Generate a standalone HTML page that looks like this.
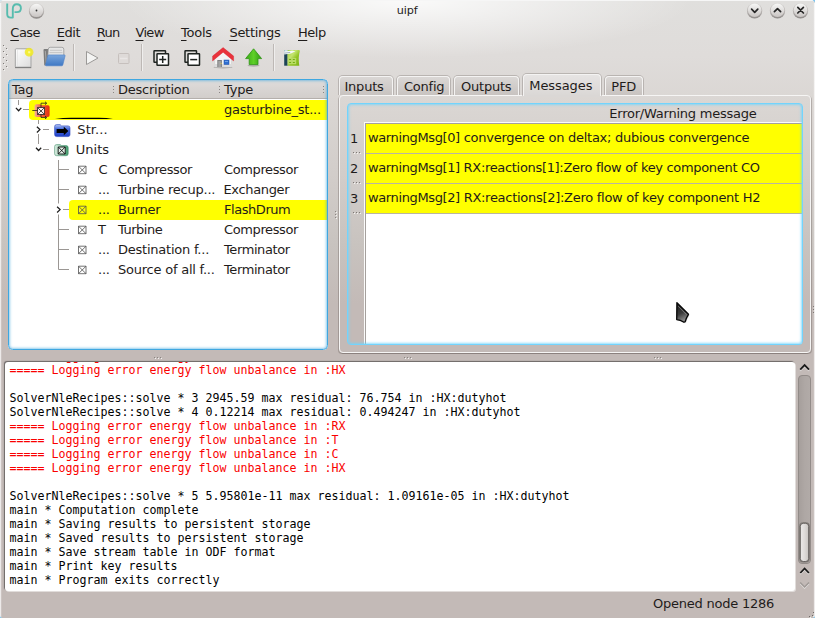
<!DOCTYPE html>
<html><head><meta charset="utf-8"><title>uipf</title>
<style>
html,body{margin:0;padding:0;}
body{width:815px;height:618px;overflow:hidden;position:relative;font-family:"DejaVu Sans","Liberation Sans",sans-serif;font-size:13px;letter-spacing:-0.23px;color:#1f1c1b;
background:radial-gradient(ellipse 285px 58px at 407px 0px,rgba(255,255,255,0.85),rgba(255,255,255,0) 100%),linear-gradient(to bottom,#e0dfdd 0px,#dfdcda 56px,#dad6d3 104px,#d2cdca 174px,#c8c3bf 244px,#c3bab7 304px,#c3bab7 618px);}
.abs{position:absolute;}
u{text-decoration-thickness:1px;text-underline-offset:2.500px;}
.t{position:absolute;white-space:pre;line-height:16px;}
svg{position:absolute;overflow:visible;}
#log{position:absolute;left:5px;top:362px;width:790px;height:229px;background:#fff;border-radius:3px;overflow:hidden;box-shadow:-1px -1px 1px rgba(0,0,0,0.45),1px 1px 0 rgba(255,255,255,0.5);}
#log pre{margin:0;position:absolute;left:4.500px;top:-13px;font-family:"DejaVu Sans Mono","Liberation Mono",monospace;font-size:11.63px;letter-spacing:0;line-height:14px;color:#000;}
#log .r{color:#fa0000;}
.yrow{position:absolute;background:#ffff00;}
.hdr{position:absolute;background:linear-gradient(to bottom,#dfdcdb,#d2cecb);}
.tab{position:absolute;top:76px;height:19px;border:1px solid #f4f3f2;border-bottom:none;border-radius:4px 4px 0 0;box-sizing:border-box;background:linear-gradient(to bottom,#dad7d5,#c8c3c0);box-shadow:0 0 0 1px rgba(60,50,45,0.22);clip-path:inset(-2px -2px 0 -2px);}
</style></head><body>
<!-- window frame edges -->
<div class="abs" style="left:0;top:0;width:815px;height:1px;background:#f6f6f6"></div>
<div class="abs" style="left:813px;top:3px;width:2px;height:615px;background:linear-gradient(to right,rgba(255,255,255,0.1),rgba(255,255,255,0.1) 50%,rgba(255,255,255,0.7) 50%)"></div><div class="abs" style="left:812px;top:0;width:3px;height:3px;background:radial-gradient(circle at 0 100%,rgba(0,0,0,0) 2.500px,#7ec4ee 3px)"></div><div class="abs" style="left:0;top:0;width:3px;height:3px;background:radial-gradient(circle at 100% 100%,rgba(0,0,0,0) 2.500px,#d8e6ee 3px)"></div>
<div class="abs" style="left:0;top:3px;width:2px;height:615px;background:linear-gradient(to right,rgba(255,255,255,0.7) 50%,rgba(255,255,255,0.15) 50%)"></div>
<!-- title -->
<div class="t" style="left:396.700px;top:3px;font-size:11.200px;letter-spacing:-0.100px">uipf</div>
<!-- menu -->
<div class="t" style="left:10.300px;top:25px;letter-spacing:-0.500px"><u>C</u>ase</div>
<div class="t" style="left:56.800px;top:25px;letter-spacing:-0.500px"><u>E</u>dit</div>
<div class="t" style="left:96.800px;top:25px;letter-spacing:-0.800px"><u>R</u>un</div>
<div class="t" style="left:135.500px;top:25px;letter-spacing:-0.700px"><u>V</u>iew</div>
<div class="t" style="left:181px;top:25px;"><u>T</u>ools</div>
<div class="t" style="left:229.400px;top:25px;letter-spacing:-0.280px"><u>S</u>ettings</div>
<div class="t" style="left:298px;top:25px;letter-spacing:-0.500px"><u>H</u>elp</div>

<!-- TOOLBAR -->
<svg id="tb" style="left:0;top:0" width="815" height="76">
 <defs>
  <radialGradient id="btn" cx="0.5" cy="0.3" r="0.7"><stop offset="0" stop-color="#fbfbfb"/><stop offset="0.6" stop-color="#e4e2e1"/><stop offset="1" stop-color="#b9b5b3"/></radialGradient>
  <linearGradient id="btn2" x1="0" y1="0" x2="0" y2="1"><stop offset="0" stop-color="#f7f7f6"/><stop offset="1" stop-color="#c9c5c3"/></linearGradient>
  <radialGradient id="glow" cx="0.5" cy="0.5" r="0.5"><stop offset="0" stop-color="#ffffc0"/><stop offset="0.35" stop-color="#f4ee30"/><stop offset="0.8" stop-color="#f0e820" stop-opacity="0.8"/><stop offset="1" stop-color="#f0e820" stop-opacity="0"/></radialGradient>
  <linearGradient id="page" x1="0" y1="0" x2="1" y2="1"><stop offset="0" stop-color="#ffffff"/><stop offset="1" stop-color="#dcdcdc"/></linearGradient>
  <linearGradient id="fold" x1="0" y1="0" x2="0" y2="1"><stop offset="0" stop-color="#7aa6dc"/><stop offset="1" stop-color="#3f78c4"/></linearGradient>
  <linearGradient id="grn" x1="0" y1="0" x2="1" y2="0"><stop offset="0" stop-color="#3aa818"/><stop offset="0.5" stop-color="#5fd028"/><stop offset="1" stop-color="#2f9a12"/></linearGradient>
  <linearGradient id="calc" x1="0" y1="0" x2="0" y2="1"><stop offset="0" stop-color="#b4dc3c"/><stop offset="1" stop-color="#7fae1c"/></linearGradient>
 </defs>
 <!-- logo -->
 <g fill="none" stroke="#57bcae" stroke-width="1.900" stroke-linecap="butt" stroke-linejoin="round">
  <path d="M7.200 3.400v10.600q0 3.600 3.600 3.600h2v-8.600q0-4.700 4-4.700q4.100 0 4.100 3.900q0 3.900-4.100 3.900h-2.300"/>
 </g>
 <!-- window buttons -->
 <defs><linearGradient id="btnsh" x1="0" y1="0" x2="0" y2="1"><stop offset="0" stop-color="#d9d7d5"/><stop offset="0.5" stop-color="#bdb9b7"/><stop offset="1" stop-color="#8d8987"/></linearGradient></defs>
 <circle cx="36.5" cy="11.0" r="7.700" fill="url(#btnsh)"/><circle cx="36.5" cy="10.4" r="6.700" fill="url(#btn2)"/><circle cx="754.6" cy="10.8" r="7.700" fill="url(#btnsh)"/><circle cx="754.6" cy="10.2" r="6.700" fill="url(#btn2)"/><circle cx="777.5" cy="10.8" r="7.700" fill="url(#btnsh)"/><circle cx="777.5" cy="10.2" r="6.700" fill="url(#btn2)"/><circle cx="800.5" cy="10.8" r="7.700" fill="url(#btnsh)"/><circle cx="800.5" cy="10.2" r="6.700" fill="url(#btn2)"/>
 <circle cx="36.500" cy="10.500" r="0.900" fill="#333"/>
 <g fill="none" stroke="#262626" stroke-width="1.700" stroke-linecap="round" stroke-linejoin="round">
  <path d="M751.600 9.200l3.100 3.100l3.100-3.100"/>
  <path d="M774.400 11.700l3.100-3.100l3.100 3.100"/>
  <path d="M797.800 7.400l5.600 5.600M803.400 7.400l-5.600 5.600"/>
 </g>
 <!-- handle dots -->
 <g fill="#7d7976"><rect x="3" y="45" width="1" height="1"/><rect x="3" y="51" width="1" height="1"/><rect x="3" y="57" width="1" height="1"/><rect x="3" y="63" width="1" height="1"/><rect x="3" y="69" width="1" height="1"/><rect x="6" y="48" width="1" height="1"/><rect x="6" y="54" width="1" height="1"/><rect x="6" y="60" width="1" height="1"/><rect x="6" y="66" width="1" height="1"/></g>
 <g fill="#f4f3f2"><rect x="4" y="46" width="1" height="1"/><rect x="4" y="52" width="1" height="1"/><rect x="4" y="58" width="1" height="1"/><rect x="4" y="64" width="1" height="1"/><rect x="4" y="70" width="1" height="1"/><rect x="7" y="49" width="1" height="1"/><rect x="7" y="55" width="1" height="1"/><rect x="7" y="61" width="1" height="1"/><rect x="7" y="67" width="1" height="1"/></g>
 <!-- separators -->
 <g>
  <rect x="73" y="44" width="1" height="27" fill="#bdb8b5"/><rect x="74" y="44" width="1" height="27" fill="#efeeed"/>
  <rect x="141" y="44" width="1" height="27" fill="#bdb8b5"/><rect x="142" y="44" width="1" height="27" fill="#efeeed"/>
  <rect x="273" y="44" width="1" height="27" fill="#bdb8b5"/><rect x="274" y="44" width="1" height="27" fill="#efeeed"/>
 </g>
 <!-- new doc -->
 <rect x="15.300" y="48.800" width="15.700" height="18.400" rx="0.800" fill="url(#page)" stroke="#a3a3a3" stroke-width="1"/>
 <path d="M15 67.600h16.300" stroke="#7e7e7e" stroke-width="1.100"/>
 <path d="M17.500 50v16" stroke="#e2e2e2" stroke-width="0.700"/>
 <circle cx="29.100" cy="52.200" r="4.900" fill="url(#glow)"/>
 <!-- open folder -->
 <path d="M43.500 50q0-1 1-1h4v6l-3 10.500h-0.800q-0.500 0-0.500-0.800z" fill="#7c7c7c"/>
 <path d="M45.300 51l1 12" stroke="#b5b5b5" stroke-width="0.800"/>
 <path d="M48.300 49q0.200-1.700 2-1.700h11.500q2 0 2 2v6.500h-16z" fill="#e6e6e6" stroke="#8f8f8f" stroke-width="0.700"/>
 <path d="M50 50.300h12M49.500 52.600h13" stroke="#bcbcbc" stroke-width="0.800"/>
 <path d="M48.800 54.900h15.600q0.900 0 0.700 0.900l-2.300 9.200q-0.200 0.800-1.100 0.800h-15.500q-0.900 0-0.700-0.800l2.300-9.400q0.200-0.700 1-0.700z" fill="url(#fold)" stroke="#4b7fc6" stroke-width="0.600"/>
 <!-- play -->
 <path d="M86.500 51.500l11.500 6.500l-11.500 6.500z" fill="#f4f4f3" stroke="#9b9997" stroke-width="1" stroke-linejoin="round"/>
 <!-- stop -->
 <rect x="118.500" y="53.500" width="10.500" height="10" rx="1" fill="#dedad8" stroke="#c6c0bd" stroke-width="1"/><path d="M120 58.500h7.500" stroke="#e9e6e5" stroke-width="1.500"/>
 <!-- expand -->
 <g stroke="#1f2421" stroke-width="1.500">
  <rect x="154" y="50.800" width="11.500" height="11.500" rx="0.500" fill="none"/>
  <rect x="157" y="53.800" width="11.500" height="11.500" rx="0.500" fill="#fff"/>
  <path d="M159.200 59.600h7M162.700 56.100v7" fill="none"/>
  <rect x="185" y="50.800" width="11.500" height="11.500" rx="0.500" fill="none"/>
  <rect x="188" y="53.800" width="11.500" height="11.500" rx="0.500" fill="#fff"/>
  <path d="M190.200 59.600h7" fill="none"/>
 </g>
 <!-- home -->
 <ellipse cx="223" cy="67.200" rx="9.500" ry="1.300" fill="#000" opacity="0.22"/>
 <path d="M214.700 57l8.400-7l8.400 7v10h-16.800z" fill="#f4f4f4" stroke="#cfcfcf" stroke-width="0.600"/>
 <path d="M214.700 64h16.800v3h-16.800z" fill="#dcdcdc"/>
 <rect x="217.300" y="60" width="4.600" height="7" fill="#7f7f7f"/>
 <rect x="218.300" y="61" width="2.600" height="6" fill="#a4a4a4"/>
 <rect x="220.600" y="62.800" width="0.900" height="1.200" fill="#e8d44a"/>
 <rect x="224" y="60" width="5" height="4.500" fill="#2f6fd0" stroke="#1c4fa8" stroke-width="0.500"/>
 <path d="M225 61.500h3" stroke="#7fb0f0" stroke-width="0.800"/>
 <path d="M223.100 47.600l10.500 8.500v4.800l-10.500-8.700l-10.500 8.700v-4.800z" fill="#e9333c" stroke="#d4202a" stroke-width="0.400" stroke-linejoin="round"/>
 <!-- up arrow -->
 <ellipse cx="253.500" cy="65.500" rx="6" ry="1.200" fill="#000" opacity="0.2"/>
 <path d="M253.600 48.800l8 9.800h-3.600v6h-8.800v-6h-3.600z" fill="url(#grn)" stroke="#2f9414" stroke-width="0.8" stroke-linejoin="round"/>
 <!-- calc -->
 <defs><linearGradient id="calc2" x1="0" y1="0" x2="1" y2="1"><stop offset="0" stop-color="#a6d23a"/><stop offset="0.35" stop-color="#c4e470"/><stop offset="0.6" stop-color="#92c424"/><stop offset="1" stop-color="#7eb218"/></linearGradient></defs>
 <path d="M284.200 50h3.500v15.700h-3.500z" fill="#1d4458"/>
 <path d="M287.500 50h11.300q1 0 1 1q-1.800 6.500-0.500 14.700h-11.800z" fill="url(#calc2)"/>
 <path d="M284.200 50h3.500v4h-3.500z" fill="#c9dde4"/>
 <path d="M284.200 51.600l8-1.200l3.200 0.800l-4.400 2.300l-6.800 1z" fill="#f4f9fa"/>
 <path d="M284.200 53.200l6-0.800" stroke="#6d8894" stroke-width="0.600" fill="none"/>
 <rect x="288" y="58" width="8.200" height="6.200" fill="#b9dc66"/>
 <g fill="#74ac10"><rect x="288.900" y="59.100" width="2.300" height="0.900" rx="0.400"/><rect x="292.700" y="59.100" width="2.300" height="0.900" rx="0.400"/><rect x="288.900" y="62" width="2.300" height="0.900" rx="0.400"/><rect x="292.700" y="62" width="2.300" height="0.900" rx="0.400"/></g>
</svg>

<!-- tree panel -->
<div class="abs" id="tree" style="left:8px;top:79px;width:320px;height:271px;box-sizing:border-box;border-radius:4.500px;background:#fff;"></div>

<!-- tree content (page coords) -->
<div class="hdr" style="left:9px;top:80px;width:318px;height:18px;border-radius:3.500px 3.500px 0 0;border-bottom:1px solid #b4afac;"></div>
<div class="t" style="left:12px;top:82px;">Tag</div>
<div class="t" style="left:118px;top:82px;">Description</div>
<div class="t" style="left:224px;top:82px;">Type</div>
<svg style="left:0;top:0" width="340" height="360">
 <g fill="#8a8683"><rect x="113" y="86" width="1" height="1"/><rect x="113" y="89" width="1" height="1"/><rect x="113" y="92" width="1" height="1"/>
 <rect x="219" y="86" width="1" height="1"/><rect x="219" y="89" width="1" height="1"/><rect x="219" y="92" width="1" height="1"/>
 <rect x="323" y="86" width="1" height="1"/><rect x="323" y="89" width="1" height="1"/><rect x="323" y="92" width="1" height="1"/></g>
</svg>
<div class="yrow" style="left:29px;top:100px;width:298px;height:20px;border-radius:4px 0 0 4px"></div>
<div class="yrow" style="left:69px;top:200px;width:258px;height:20px;border-radius:4px 0 0 4px"></div>
<svg style="left:0;top:0" width="340" height="130"><path d="M55 119q8-1.300 16-1.300h28q8 0 14 1.300z" fill="#000"/></svg>
<svg style="left:0;top:0" width="340" height="360" fill="none">
 <g stroke="#9b9794" stroke-width="1">
  <path d="M18.5 100v5M23 109.5h6"/>
  <path d="M38.5 120v4M38.5 134v10M43 129.5h6M43 149.5h6"/>
  <path d="M58.500 160v43.500M58.500 214.500v55M58.500 169.500h10.500M58.500 189.500h10.500M63 209.500h6M58.500 229.500h10.500M58.500 249.500h10.500M58.500 269.500h10.500"/>
 </g>
 <g stroke="#1c1c1c" stroke-width="1.250">
  <path d="M15.900 107.900l2.700 2.900l2.700-2.900"/>
  <path d="M36 147.700l2.600 2.800l2.600-2.800"/>
  <path d="M36.900 126.700l3 2.900l-3 2.900"/>
  <path d="M57.100 206.700l3 2.900l-3 2.900"/>
 </g>
 <!-- small xbox icons -->
 <g stroke="#4f4f4f" stroke-width="0.800" id="xb">
  <path d="M78.500 166.2h7.500v7.500h-7.500zM78.500 166.2l7.500 7.500M86 166.2l-7.500 7.500"/>
  <path d="M78.500 186.2h7.500v7.500h-7.500zM78.500 186.2l7.500 7.500M86 186.2l-7.500 7.500"/>
  <path d="M78.500 206.2h7.500v7.500h-7.500zM78.500 206.2l7.500 7.500M86 206.2l-7.500 7.500"/>
  <path d="M78.500 226.2h7.500v7.500h-7.500zM78.500 226.2l7.500 7.500M86 226.2l-7.500 7.500"/>
  <path d="M78.500 246.2h7.500v7.500h-7.500zM78.500 246.2l7.500 7.500M86 246.2l-7.500 7.500"/>
  <path d="M78.500 266.2h7.500v7.500h-7.500zM78.500 266.2l7.500 7.500M86 266.2l-7.500 7.500"/>
 </g>
 <!-- root icon -->
 <defs>
  <linearGradient id="gr" x1="0" y1="0" x2="1" y2="0"><stop offset="0" stop-color="#f6ae98"/><stop offset="0.4" stop-color="#f0623e"/><stop offset="1" stop-color="#e42e0c"/></linearGradient>
  <linearGradient id="gb" x1="0" y1="0" x2="0" y2="1"><stop offset="0" stop-color="#b8c8f4"/><stop offset="0.35" stop-color="#4a6fe0"/><stop offset="1" stop-color="#1f3fc8"/></linearGradient>
  <linearGradient id="gg" x1="0" y1="0" x2="1" y2="0"><stop offset="0" stop-color="#dff0e6"/><stop offset="1" stop-color="#3f9a6a"/></linearGradient>
 </defs>
 <path d="M34.600 106q0-1.800 1.800-1.800h3.500l1 1h7q1.700 0 1.700 1.700v8.300q0 1.800-1.800 1.800h-11.400q-1.800 0-1.800-1.800z" fill="url(#gr)" stroke="none"/>
 <rect x="37.500" y="107.500" width="7" height="7" fill="#fbeee8" stroke="none"/>
 <g stroke="#1a1a1a" stroke-width="0.750" fill="none"><path d="M37.500 107.500h7v7h-7zM37.500 107.500l7 7M44.500 107.500l-7 7M32.300 110.500h5.200M41 107.500v-4.300h5M41 114.500v3h5"/><path d="M45 101.800l1.800 1.400l-1.800 1.400M45 116.100l1.800 1.400l-1.800 1.400" stroke-width="0.800"/></g>
 <!-- streams folder -->
 <path d="M54.600 126.600q0-2 2-2h3.500l1.500 1.300h6.400q2 0 2 2v6.700q0 2-2 2h-11.400q-2 0-2-2z" fill="url(#gb)" stroke="#2c44b8" stroke-width="0.600"/>
 <path d="M56.600 129h7.200v-2.200l4.600 4.200l-4.600 4.200v-2.200h-7.200z" fill="#000" stroke="none"/>
 <!-- units folder -->
 <path d="M54.600 146.600q0-2 2-2h3.500l1.500 1h4.600q2 0 2 2v6.100q0 2-2 2h-9.600q-2 0-2-2z" fill="url(#gg)" stroke="#4a9270" stroke-width="0.600"/>
 <rect x="58.200" y="147" width="7" height="7" fill="#e6f2ea" stroke="none"/>
 <g stroke="#111" stroke-width="0.900" fill="none"><path d="M58.200 147h7v7h-7zM58.200 147l7 7M65.200 147l-7 7"/></g>
</svg>
<div class="t" style="left:224px;top:102px;">gasturbine_st...</div>
<div class="t" style="left:77.300px;top:122px;letter-spacing:0.100px">Str...</div>
<div class="t" style="left:75.800px;top:142px;letter-spacing:0">Units</div>
<div class="t" style="left:98.500px;top:162px;">C</div><div class="t" style="left:118px;top:162px;letter-spacing:-0.38px">Compressor</div><div class="t" style="left:224px;top:162px;letter-spacing:-0.38px">Compressor</div>
<div class="t" style="left:98px;top:182px;">...</div><div class="t" style="left:118px;top:182px;">Turbine recup...</div><div class="t" style="left:223.500px;top:182px;letter-spacing:-0.350px">Exchanger</div>
<div class="t" style="left:98px;top:202px;">...</div><div class="t" style="left:118px;top:202px;">Burner</div><div class="t" style="left:224px;top:202px;letter-spacing:-0.450px">FlashDrum</div>
<div class="t" style="left:98px;top:222px;">T</div><div class="t" style="left:118px;top:222px;letter-spacing:-0.500px">Turbine</div><div class="t" style="left:224px;top:222px;letter-spacing:-0.38px">Compressor</div>
<div class="t" style="left:98px;top:242px;">...</div><div class="t" style="left:118px;top:242px;">Destination f...</div><div class="t" style="left:224px;top:242px;letter-spacing:-0.400px">Terminator</div>
<div class="t" style="left:98px;top:262px;">...</div><div class="t" style="left:118px;top:262px;">Source of all f...</div><div class="t" style="left:224px;top:262px;letter-spacing:-0.400px">Terminator</div>
<div class="abs" id="treeframe" style="left:8px;top:79px;width:320px;height:271px;box-sizing:border-box;border:1px solid #3fa7e0;border-radius:4.500px;box-shadow:inset 0 0 2.500px 1px rgba(63,167,224,0.6)"></div>

<!-- tab widget -->
<div class="abs" id="pane" style="left:339px;top:95px;width:472px;height:258px;box-sizing:border-box;border:1px solid #f6f5f4;border-radius:4px;box-shadow:1px 1px 0 0 rgba(80,70,65,0.28),-1px 1px 0 0 rgba(80,70,65,0.28)"></div>


<!-- tabs -->
<div class="tab" style="left:339px;width:54px;"></div>
<div class="tab" style="left:397px;width:53px;"></div>
<div class="tab" style="left:454px;width:65px;"></div>
<div class="tab" style="left:605px;width:38px;"></div>
<div class="tab" id="atab" style="left:523px;width:78px;top:74px;height:22px;background:linear-gradient(to bottom,#e6e4e3,#dad7d5);clip-path:inset(-2px -2px 0 -2px)"></div>
<div class="abs" style="left:524px;top:95px;width:76px;height:2px;background:#dad7d5"></div>
<div class="t" style="left:344.500px;top:79px;">Inputs</div>
<div class="t" style="left:404px;top:79px;">Config</div>
<div class="t" style="left:461px;top:79px;">Outputs</div>
<div class="t" style="left:529.300px;top:78px;letter-spacing:-0.080px">Messages</div>
<div class="t" style="left:611.300px;top:79px;">PFD</div>
<!-- table -->
<div class="abs" style="left:364px;top:122px;width:438px;height:222px;background:#fbfbfa"></div>
<div class="abs" style="left:365px;top:123px;width:437px;height:221px;background:#a5a09d"></div>
<div class="abs" style="left:366px;top:124px;width:436px;height:220px;background:#fff"></div>
<div class="yrow" style="left:366px;top:124px;width:436px;height:29px;border-bottom:1px solid #b9b5a0"></div>
<div class="yrow" style="left:366px;top:154px;width:436px;height:29px;border-bottom:1px solid #b9b5a0"></div>
<div class="yrow" style="left:366px;top:184px;width:436px;height:29px;border-bottom:1px solid #b9b5a0"></div>
<div class="t" style="left:609.300px;top:106px;">Error/Warning message</div>
<div class="t" style="left:350px;top:131px;">1</div>
<div class="t" style="left:350px;top:161px;">2</div>
<div class="t" style="left:350px;top:191px;">3</div>
<div class="t" style="left:368px;top:130px;letter-spacing:-0.26px"><span style="letter-spacing:-0.38px">warningMsg[0]</span> convergence on deltax; dubious convergence</div>
<div class="t" style="left:368px;top:160px;letter-spacing:-0.320px"><span style="letter-spacing:-0.380px">warningMsg[1]</span> RX:reactions[1]:Zero flow of key component CO</div>
<div class="t" style="left:368px;top:190px;letter-spacing:-0.28px"><span style="letter-spacing:-0.38px">warningMsg[2]</span> RX:reactions[2]:Zero flow of key component H2</div>
<div class="abs" style="left:347px;top:103px;width:456px;height:242px;box-sizing:border-box;border:1px solid #72d4fd;border-radius:4px;box-shadow:inset 0 0 2.500px 1px rgba(114,212,253,0.8)"></div>
<svg style="left:0;top:0" width="815" height="618">
 <g fill="#7d7875"><rect x="353" y="152" width="1" height="1"/><rect x="356" y="152" width="1" height="1"/><rect x="359" y="152" width="1" height="1"/><rect x="353" y="182" width="1" height="1"/><rect x="356" y="182" width="1" height="1"/><rect x="359" y="182" width="1" height="1"/><rect x="353" y="212" width="1" height="1"/><rect x="356" y="212" width="1" height="1"/><rect x="359" y="212" width="1" height="1"/></g>
 <g fill="#f6f5f4"><rect x="354" y="153" width="1" height="1"/><rect x="357" y="153" width="1" height="1"/><rect x="360" y="153" width="1" height="1"/><rect x="354" y="183" width="1" height="1"/><rect x="357" y="183" width="1" height="1"/><rect x="360" y="183" width="1" height="1"/><rect x="354" y="213" width="1" height="1"/><rect x="357" y="213" width="1" height="1"/><rect x="360" y="213" width="1" height="1"/></g>
 <!-- splitter dots -->
 <g fill="#8a8582"><rect x="154" y="357" width="1" height="1"/><rect x="157" y="357" width="1" height="1"/><rect x="160" y="357" width="1" height="1"/><rect x="404" y="357" width="1" height="1"/><rect x="407" y="357" width="1" height="1"/><rect x="410" y="357" width="1" height="1"/><rect x="654" y="357" width="1" height="1"/><rect x="657" y="357" width="1" height="1"/><rect x="660" y="357" width="1" height="1"/><rect x="335" y="211" width="1" height="1"/><rect x="335" y="214" width="1" height="1"/><rect x="335" y="217" width="1" height="1"/></g>
 <g fill="#f3f2f1"><rect x="155" y="358" width="1" height="1"/><rect x="158" y="358" width="1" height="1"/><rect x="161" y="358" width="1" height="1"/><rect x="405" y="358" width="1" height="1"/><rect x="408" y="358" width="1" height="1"/><rect x="411" y="358" width="1" height="1"/><rect x="655" y="358" width="1" height="1"/><rect x="658" y="358" width="1" height="1"/><rect x="661" y="358" width="1" height="1"/><rect x="336" y="212" width="1" height="1"/><rect x="336" y="215" width="1" height="1"/><rect x="336" y="218" width="1" height="1"/></g>
 <g fill="#7d7875"><rect x="813" y="306" width="1" height="1"/><rect x="813" y="309" width="1" height="1"/><rect x="813" y="312" width="1" height="1"/></g>
 <g fill="#f3f2f1"><rect x="814" y="307" width="1" height="1"/><rect x="814" y="310" width="1" height="1"/><rect x="814" y="313" width="1" height="1"/></g>
 <!-- mouse cursor -->
 <defs><linearGradient id="cur" x1="0" y1="0" x2="0.300" y2="1"><stop offset="0" stop-color="#1a1a1a"/><stop offset="0.600" stop-color="#3a3a3a"/><stop offset="1" stop-color="#8a8a8a"/></linearGradient></defs>
 <path d="M677 302.600l11.600 11.700q-2.300 3.500-3.300 7.300q-0.700 0.800-1.700 0.500q-3-2.400-7-2.500z" fill="#000" opacity="0.18" transform="translate(0.800,1)"/>
 <path d="M676.900 302.600l11.600 11.700q-2.300 3.500-3.300 7.300q-0.700 0.800-1.700 0.500q-3-2.400-6.800-2.500z" fill="url(#cur)" stroke="#050505" stroke-width="1.300" stroke-linejoin="round"/>
 <path d="M678.200 306.200l8.300 8.400" fill="none" stroke="#9a9a9a" stroke-width="0.600"/>
 <!-- scrollbar -->
 <defs><linearGradient id="hnd" x1="0" y1="0" x2="1" y2="0"><stop offset="0" stop-color="#eceae9"/><stop offset="0.5" stop-color="#dedbd9"/><stop offset="1" stop-color="#c9c5c2"/></linearGradient>
 <linearGradient id="grv" x1="0" y1="0" x2="1" y2="0"><stop offset="0" stop-color="#a59e9b"/><stop offset="0.5" stop-color="#aea7a4"/><stop offset="1" stop-color="#b2aba8"/></linearGradient></defs>
 <rect x="798.500" y="375.500" width="12" height="188" rx="3.500" fill="url(#grv)" stroke="#928b88" stroke-width="1"/>
 <rect x="799.200" y="522.200" width="10.600" height="40.400" rx="4" fill="#7f7976"/><rect x="800.300" y="523.300" width="8.400" height="38.200" rx="3" fill="url(#hnd)" stroke="#5d5957" stroke-width="0.900"/>
 <g fill="none" stroke="#f2f1f0" stroke-width="1.300" opacity="0.8"><path d="M800.200 370.700l4.400-4.500l4.400 4.500"/><path d="M800.300 574.100l4.300-4.500l4.300 4.500"/></g>
 <g fill="none" stroke="#1a1a1a" stroke-width="1.800"><path d="M800.200 369.600l4.400-4.500l4.400 4.500"/><path d="M800.300 573l4.300-4.500l4.300 4.500"/></g>
 <g fill="none" stroke="#e4e1df" stroke-width="1.200"><path d="M800.200 583.600l4.400 4.500l4.400-4.500"/></g><g fill="none" stroke="#9f9996" stroke-width="1.400"><path d="M800.200 582.600l4.400 4.500l4.400-4.500"/></g>
</svg>

<!-- log -->
<div id="log"><pre><span class="r">===== Logging error energy flow unbalance in :RX</span>
<span class="r">===== Logging error energy flow unbalance in :HX</span>

SolverNleRecipes::solve * 3 2945.59 max residual: 76.754 in :HX:dutyhot
SolverNleRecipes::solve * 4 0.12214 max residual: 0.494247 in :HX:dutyhot
<span class="r">===== Logging error energy flow unbalance in :RX</span>
<span class="r">===== Logging error energy flow unbalance in :T</span>
<span class="r">===== Logging error energy flow unbalance in :C</span>
<span class="r">===== Logging error energy flow unbalance in :HX</span>

SolverNleRecipes::solve * 5 5.95801e-11 max residual: 1.09161e-05 in :HX:dutyhot
main * Computation complete
main * Saving results to persistent storage
main * Saved results to persistent storage
main * Save stream table in ODF format
main * Print key results
main * Program exits correctly</pre></div>
<svg style="left:0;top:0" width="815" height="618"><g fill="#6f6a68"><rect x="809" y="616" width="1" height="1"/><rect x="812" y="615" width="1" height="1"/><rect x="813" y="612" width="1" height="1"/></g><g fill="#f0efee"><rect x="810" y="617" width="1" height="1"/><rect x="813" y="616" width="1" height="1"/><rect x="814" y="613" width="1" height="1"/></g>
<path d="M815 615.500q0 2.500-2.500 2.500h2.500z" fill="#6cc0ee"/><path d="M0 615.500q0 2.500 2.500 2.500h-2.500z" fill="#6cc0ee"/></svg>
<div class="t" style="left:653px;top:596px;">Opened node 1286</div>
</body></html>
